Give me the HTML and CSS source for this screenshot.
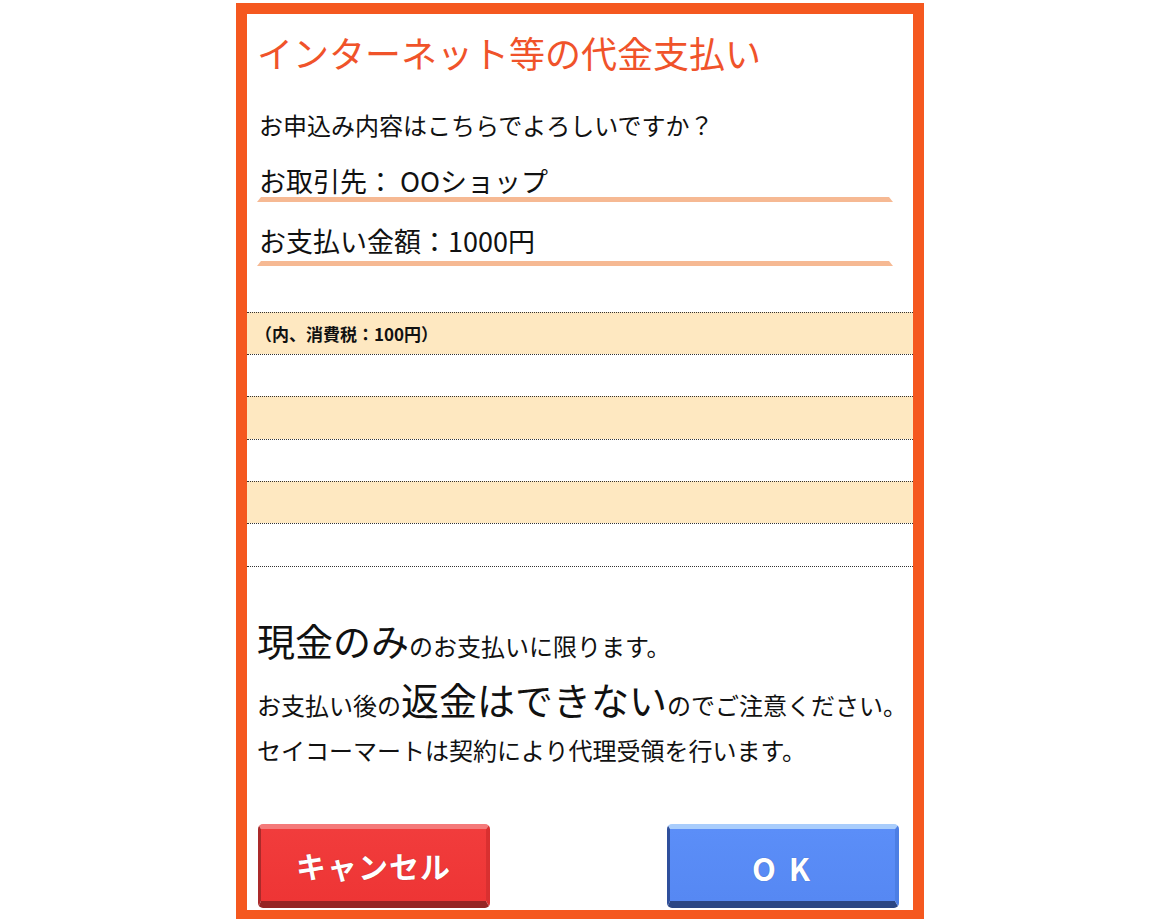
FILE: index.html
```html
<!DOCTYPE html>
<html lang="ja">
<head>
  <meta charset="UTF-8" />
  <title>インターネット等の代金支払い</title>
  <link rel="stylesheet" href="styles.css">
</head>
<body>
  <div class="screen">
    <h1 class="title">インターネット等の代金支払い</h1>
    <p class="question">お申込み内容はこちらでよろしいですか？</p>

    <div class="field">
      <p>お取引先： OOショップ</p>
      <div class="bar"></div>
    </div>
    <div class="field field-amount">
      <p>お支払い金額：1000円</p>
      <div class="bar"></div>
    </div>

    <!-- 明細欄 -->
    <ul class="lines">
      <li>（内、消費税：100円）</li>
      <li></li>
      <li></li>
      <li></li>
      <li></li>
      <li></li>
    </ul>

    <div class="notice">
      <p class="notice-line"><span class="big">現金のみ</span>のお支払いに限ります。</p>
      <p class="notice-line">お支払い後の<span class="big">返金はできない</span>のでご注意ください。</p>
      <p class="notice-last">セイコーマートは契約により代理受領を行います。</p>
    </div>

    <div class="actions">
      <button class="btn btn-cancel">キャンセル</button>
      <button class="btn btn-ok">O K</button>
    </div>
  </div>
</body>
</html>
```

FILE: styles.css
```css
body {
  margin: 0;
  background-color: #fff;
  color: #111;
  font-family: "Noto Sans CJK JP", "Noto Sans", sans-serif;
}

.screen {
  width: 666px;
  height: 896px;
  margin: 3px auto 0;
  border: 11px solid #f5581f;
  border-bottom-width: 9px;
  background-color: #fff;
  box-shadow: 0 1px 0 #fff, 0 2px 0 #8c8c8c;
}

.title {
  margin: 0;
  padding: 16px 0 0 10px;
  font-size: 36px;
  font-weight: normal;
  line-height: 44px;
  color: #f0532a;
}

.question {
  margin: 35px 0 0;
  padding-left: 12px;
  font-size: 24px;
  line-height: 32px;
}

.field {
  margin-top: 23px;
}

.field p {
  margin: 0;
  padding-left: 12px;
  font-size: 27px;
  line-height: 33px;
}

.field-amount {
  margin-top: 22px;
}

.bar {
  width: 636px;
  height: 5px;
  margin-left: 10px;
  background-color: #f6b993;
  clip-path: polygon(4px 0, calc(100% - 4px) 0, 100% 100%, 0 100%);
}

.field-amount .bar {
  margin-top: 4px;
}

.lines {
  list-style: none;
  margin: 46px 0 0;
  padding: 0;
  border-bottom: 1px dotted #333;
}

.lines li {
  box-sizing: border-box;
  height: 42px;
  padding-left: 8px;
  border-top: 1px dotted #333;
  font-size: 17px;
  font-weight: bold;
  line-height: 41px;
}

.lines li:nth-child(odd) {
  background-color: #fee8c1;
}

.lines li:nth-child(3),
.lines li:nth-child(6) {
  height: 43px;
}

.notice {
  margin-top: 49px;
  padding-left: 10px;
}

.notice p {
  margin: 0;
  font-size: 24px;
  white-space: nowrap;
}

.notice-line {
  line-height: 59px;
}

.notice .big {
  font-size: 38px;
  line-height: 1;
}

.notice-last {
  line-height: 32px;
}

.actions {
  display: flex;
  justify-content: space-between;
  margin-top: 58px;
  padding: 0 14px 0 11px;
}

.btn {
  box-sizing: border-box;
  width: 232px;
  height: 84px;
  border-style: solid;
  border-width: 5px 4px 7px 3px;
  border-radius: 5px;
  color: #fff;
  font-family: "Noto Sans CJK JP", sans-serif;
  font-weight: bold;
  text-shadow: 0 0 1px rgba(0, 0, 0, 0.35);
  cursor: pointer;
}

.btn-cancel {
  background: linear-gradient(#f13c3c, #ee3535);
  border-color: #f47a7a #d93030 #962424 #ab2a2a;
  font-size: 30px;
  letter-spacing: 1px;
}

.btn-ok {
  background: linear-gradient(#5b8ef8, #5688f3);
  border-color: #a9cdfc #4c7ee4 #2b4684 #2f4f9c;
  font-size: 31px;
  padding-top: 6px;
  letter-spacing: 3px;
}
```
